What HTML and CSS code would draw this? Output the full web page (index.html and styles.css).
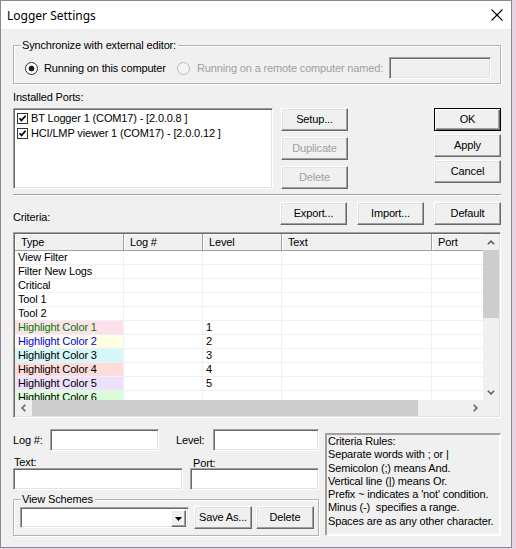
FILE: index.html
```html
<!DOCTYPE html>
<html>
<head>
<meta charset="utf-8">
<title>Logger Settings</title>
<link rel="stylesheet" href="styles.css">
</head>
<body>
<div class="window">
  <div class="titlebar">
    <span class="title">Logger Settings</span>
    <svg class="close" width="12" height="12" viewBox="0 0 12 12"><path d="M0.5 0.5L11.5 11.5M11.5 0.5L0.5 11.5" stroke="#000" stroke-width="1.1" fill="none"/></svg>
  </div>
  <div class="client">
    <fieldset class="group sync">
      <legend>Synchronize with external editor:</legend>
      <div class="sync-row">
        <span class="radio on"></span>
        <span class="rlabel first">Running on this computer</span>
        <span class="radio off"></span>
        <span class="rlabel second disabled">Running on a remote computer named:</span>
        <span class="field remote"></span>
      </div>
    </fieldset>

    <div class="caption ports-caption">Installed Ports:</div>
    <div class="ports-row">
      <div class="field listbox">
        <div class="item">
          <svg class="chk" width="11" height="11" viewBox="0 0 11 11"><rect x="0.5" y="0.5" width="10" height="10" fill="#fff" stroke="#333"/><path d="M2.5 5.2L4.5 7.4L8.6 2.8" stroke="#000" stroke-width="1.7" fill="none"/></svg>
          <span>BT Logger 1 (COM17) - [2.0.0.8 ]</span>
        </div>
        <div class="item">
          <svg class="chk" width="11" height="11" viewBox="0 0 11 11"><rect x="0.5" y="0.5" width="10" height="10" fill="#fff" stroke="#333"/><path d="M2.5 5.2L4.5 7.4L8.6 2.8" stroke="#000" stroke-width="1.7" fill="none"/></svg>
          <span>HCI/LMP viewer 1 (COM17) - [2.0.0.12 ]</span>
        </div>
      </div>
      <div class="btn-col mid">
        <button class="btn">Setup...</button>
        <button class="btn" disabled>Duplicate</button>
        <button class="btn" disabled>Delete</button>
      </div>
      <div class="btn-col right">
        <button class="btn default">OK</button>
        <button class="btn">Apply</button>
        <button class="btn">Cancel</button>
      </div>
    </div>
    <div class="separator"></div>

    <div class="criteria-bar">
      <span class="caption criteria-caption">Criteria:</span>
      <button class="btn">Export...</button>
      <button class="btn import">Import...</button>
      <button class="btn defaults">Default</button>
    </div>

    <div class="grid-frame">
      <div class="grid-view">
        <div class="grid-table">
          <div class="hcell">Type</div><div class="hcell">Log #</div><div class="hcell">Level</div><div class="hcell">Text</div><div class="hcell">Port</div>

          <div class="cell">View Filter</div><div class="cell"></div><div class="cell"></div><div class="cell"></div><div class="cell"></div>
          <div class="cell">Filter New Logs</div><div class="cell"></div><div class="cell"></div><div class="cell"></div><div class="cell"></div>
          <div class="cell">Critical</div><div class="cell"></div><div class="cell"></div><div class="cell"></div><div class="cell"></div>
          <div class="cell">Tool 1</div><div class="cell"></div><div class="cell"></div><div class="cell"></div><div class="cell"></div>
          <div class="cell">Tool 2</div><div class="cell"></div><div class="cell"></div><div class="cell"></div><div class="cell"></div>
          <div class="cell hc1">Highlight Color 1</div><div class="cell"></div><div class="cell">1</div><div class="cell"></div><div class="cell"></div>
          <div class="cell hc2">Highlight Color 2</div><div class="cell"></div><div class="cell">2</div><div class="cell"></div><div class="cell"></div>
          <div class="cell hc3">Highlight Color 3</div><div class="cell"></div><div class="cell">3</div><div class="cell"></div><div class="cell"></div>
          <div class="cell hc4">Highlight Color 4</div><div class="cell"></div><div class="cell">4</div><div class="cell"></div><div class="cell"></div>
          <div class="cell hc5">Highlight Color 5</div><div class="cell"></div><div class="cell">5</div><div class="cell"></div><div class="cell"></div>
          <div class="cell hc6">Highlight Color 6</div><div class="cell"></div><div class="cell"></div><div class="cell"></div><div class="cell"></div>
        </div>
      </div>
      <div class="vscroll">
        <div class="sbtn"><svg width="8" height="5" viewBox="0 0 8 5"><path d="M0.8 4.3L4 1.1L7.2 4.3" stroke="#606060" stroke-width="1.6" fill="none"/></svg></div>
        <div class="vthumb"></div>
        <div class="vtrack"></div>
        <div class="sbtn"><svg width="8" height="5" viewBox="0 0 8 5"><path d="M0.8 0.7L4 3.9L7.2 0.7" stroke="#606060" stroke-width="1.6" fill="none"/></svg></div>
      </div>
      <div class="hscroll">
        <div class="sbtn"><svg width="5" height="8" viewBox="0 0 5 8"><path d="M4.3 0.8L1.1 4L4.3 7.2" stroke="#606060" stroke-width="1.6" fill="none"/></svg></div>
        <div class="hthumb"></div>
        <div class="htrack"></div>
        <div class="sbtn"><svg width="5" height="8" viewBox="0 0 5 8"><path d="M0.7 0.8L3.9 4L0.7 7.2" stroke="#606060" stroke-width="1.6" fill="none"/></svg></div>
      </div>
      <div class="corner"></div>
    </div>

    <div class="bottom">
      <div class="bottom-left">
        <div class="row-log">
          <span class="caption log-label">Log #:</span>
          <span class="field log-field"></span>
          <span class="caption level-label">Level:</span>
          <span class="field level-field"></span>
        </div>
        <div class="row-labels">
          <span class="caption text-label">Text:</span>
          <span class="caption port-label">Port:</span>
        </div>
        <div class="row-text">
          <span class="field text-field"></span>
          <span class="field port-field"></span>
        </div>
        <fieldset class="group schemes">
          <legend>View Schemes</legend>
          <div class="schemes-row">
            <div class="field combo">
              <span class="combo-btn"><svg width="7" height="4" viewBox="0 0 7 4"><path d="M0 0H7L3.5 4Z" fill="#000"/></svg></span>
            </div>
            <button class="btn small save">Save As...</button>
            <button class="btn small del">Delete</button>
          </div>
        </fieldset>
      </div>
      <div class="rules">
        <div>Criteria Rules:</div>
        <div>Separate words with ; or |</div>
        <div>Semicolon (;) means And.</div>
        <div>Vertical line (|) means Or.</div>
        <div>Prefix ~ indicates a 'not' condition.</div>
        <div>Minus (-)&nbsp; specifies a range.</div>
        <div>Spaces are as any other character.</div>
      </div>
    </div>
  </div>
</div>
</body>
</html>
```

FILE: styles.css
```css
* {
  box-sizing: border-box;
}

html,
body {
  margin: 0;
}

body {
  width: 516px;
  height: 549px;
  overflow: hidden;
  background: #e6d2e0;
  font-family: "Liberation Sans", Arial, sans-serif;
  font-size: 11px;
  letter-spacing: -0.15px;
  line-height: 13px;
  color: #000;
}

.window {
  width: 512px;
  height: 548px;
  border: 1px solid #8f8496;
  background: #f0f0f0;
  display: flex;
  flex-direction: column;
}

.titlebar {
  flex: none;
  height: 28px;
  background: #fff;
  display: flex;
  align-items: center;
  padding-left: 6px;
}

.title {
  font-family: "Noto Sans", sans-serif;
  font-size: 12px;
  letter-spacing: 0;
}

.close {
  margin-left: auto;
  margin-right: 8px;
}

.client {
  flex: 1;
  display: flex;
  flex-direction: column;
  padding: 0 10px 0 12px;
}

/* generic controls */
.caption {
  white-space: nowrap;
}

.btn {
  font: inherit;
  letter-spacing: inherit;
  line-height: 13px;
  color: #000;
  width: 67px;
  height: 23px;
  padding: 0 0 1px;
  margin: 0;
  background: #f0f0f0;
  border: 1px solid;
  border-color: #fff #696969 #696969 #fff;
  box-shadow: inset -1px -1px #a0a0a0, inset 1px 1px #e3e3e3;
  display: flex;
  align-items: center;
  justify-content: center;
}

.btn:disabled {
  color: #a0a0a0;
}

.btn.default {
  border-color: #000;
  box-shadow: inset 1px 1px #fff, inset -1px -1px #696969, inset -2px -2px #a0a0a0;
}

.field {
  display: block;
  background: #fff;
  border: 1px solid;
  border-color: #a0a0a0 #fff #fff #a0a0a0;
  box-shadow: inset 1px 1px #696969, inset -1px -1px #e3e3e3;
}

fieldset.group {
  margin: 0;
  padding: 0;
  min-width: 0;
  border: 1px solid #b4b4b4;
  box-shadow: inset 1px 1px #fff, 1px 1px #fff;
}

fieldset.group legend {
  padding: 0 2px 0 1px;
  margin-left: 7px;
  line-height: 13px;
  background: #f0f0f0;
}

/* sync group */
.sync {
  margin-top: 10px !important;
}

.sync-row {
  display: flex;
  align-items: center;
  height: 22px;
  margin: 5px 0 4px 11px;
}

.radio {
  flex: none;
  width: 13px;
  height: 13px;
  border-radius: 50%;
  border: 1px solid #333;
  background: #fff;
}

.radio.on {
  background: radial-gradient(circle, #1a1a1a 0 2.6px, #fff 3.2px);
}

.radio.off {
  border-color: #bcbcbc;
  background: #f4f4f4;
}

.rlabel {
  white-space: nowrap;
  margin-left: 6px;
}

.rlabel.first {
  width: 133px;
}

.rlabel.second {
  width: 192px;
  margin-left: 7px;
}

.disabled {
  color: #a0a0a0;
}

.remote {
  width: 102px;
  height: 22px;
  background: #f0f0f0;
}

/* ports */
.ports-caption {
  margin-top: 7px;
}

.ports-row {
  display: flex;
  margin-top: 4px;
  height: 82px;
}

.listbox {
  width: 260px;
  height: 81px;
  padding: 2px 0 0 3px;
}

.item {
  display: flex;
  align-items: center;
  height: 15px;
  white-space: nowrap;
}

.chk {
  flex: none;
  margin-right: 3px;
}

.btn-col {
  display: flex;
  flex-direction: column;
}

.btn-col.mid {
  margin-left: 8px;
  gap: 6px;
}

.btn-col.right {
  margin-left: auto;
  gap: 3px;
}

.separator {
  margin-top: 4px;
  height: 2px;
  border-top: 1px solid #a0a0a0;
  border-bottom: 1px solid #fff;
}

/* criteria bar */
.criteria-bar {
  display: flex;
  align-items: flex-end;
  margin-top: 6px;
}

.criteria-caption {
  flex: 1;
  margin-bottom: 1px;
}

.criteria-bar .import {
  margin-left: 10px;
}

.criteria-bar .defaults {
  margin-left: 10px;
}

/* grid */
.grid-frame {
  margin-top: 7px;
  height: 186px;
  display: grid;
  grid-template-columns: 1fr 16px;
  grid-template-rows: 1fr 16px;
  border: 1px solid;
  border-color: #a0a0a0 #fff #fff #a0a0a0;
  box-shadow: inset 1px 1px #696969, inset -1px -1px #e3e3e3;
  padding: 1px;
  background: #fff;
}

.grid-view {
  overflow: hidden;
  background: #fff;
}

.grid-table {
  display: grid;
  grid-template-columns: 109px 79px 79px 150px 80px;
  grid-auto-rows: 14px;
  grid-template-rows: 17px;
  width: 497px;
}

.hcell {
  background: #f0f0f0;
  border-right: 1px solid #a0a0a0;
  border-bottom: 1px solid #a0a0a0;
  box-shadow: inset 1px 1px #fff;
  padding: 1px 0 0 6px;
  line-height: 14px;
  white-space: nowrap;
}

.cell {
  border-right: 1px solid #f0f0f0;
  border-bottom: 1px solid #f0f0f0;
  padding-left: 3px;
  line-height: 13px;
  white-space: nowrap;
  overflow: hidden;
}

.hc1 { background: #fde1ea; color: #007a00; }
.hc2 { background: #ffffe3; color: #0000ff; }
.hc3 { background: #d4f7fa; }
.hc4 { background: #fddcd9; }
.hc5 { background: #ece0fb; }
.hc6 { background: #d9fcd9; }

.vscroll {
  display: flex;
  flex-direction: column;
  background: #f0f0f0;
}

.sbtn {
  flex: none;
  width: 16px;
  height: 16px;
  display: flex;
  align-items: center;
  justify-content: center;
}

.vthumb {
  flex: none;
  height: 68px;
  background: #cdcdcd;
}

.vtrack,
.htrack {
  flex: 1;
}

.hscroll {
  display: flex;
  background: #f0f0f0;
}

.hthumb {
  flex: none;
  width: 386px;
  margin-left: 1px;
  background: #cdcdcd;
}

.corner {
  background: #f0f0f0;
}

/* bottom */
.bottom {
  display: flex;
  margin-top: 11px;
}

.bottom-left {
  width: 306px;
  display: flex;
  flex-direction: column;
}

.row-log {
  display: flex;
  align-items: center;
  height: 22px;
}

.log-label {
  width: 37px;
}

.log-field {
  width: 109px;
  height: 22px;
}

.level-label {
  margin-left: 17px;
  width: 37px;
}

.level-field {
  flex: 1;
  height: 22px;
}

.row-labels {
  display: flex;
  margin-top: 5px;
  height: 12px;
}

.text-label {
  width: 180px;
  padding-left: 1px;
}

.port-label {
  padding-top: 1px;
}

.row-text {
  display: flex;
  height: 22px;
  margin-top: 0;
}

.text-field {
  width: 170px;
  height: 22px;
}

.port-field {
  margin-left: 7px;
  flex: 1;
  height: 22px;
}

.schemes {
  margin-top: 3px !important;
}

.schemes-row {
  display: flex;
  align-items: center;
  height: 23px;
  margin: 0 0 6px 6px;
}

.combo {
  width: 169px;
  height: 21px;
  display: flex;
  justify-content: flex-end;
  padding: 2px;
}

.combo-btn {
  width: 15px;
  height: 17px;
  background: #f0f0f0;
  border: 1px solid;
  border-color: #fff #696969 #696969 #fff;
  box-shadow: inset -1px -1px #a0a0a0;
  display: flex;
  align-items: center;
  justify-content: center;
}

.btn.small {
  width: 58px;
}

.btn.save {
  margin-left: 5px;
}

.btn.del {
  margin-left: 4px;
}

.rules {
  margin-left: 6px;
  margin-top: 4px;
  width: 176px;
  height: 103px;
  border: 1px solid;
  border-color: #a0a0a0 #fff #fff #a0a0a0;
  box-shadow: 1px 1px #a0a0a0 inset, -1px -1px #fff inset;
  padding: 1px 0 0 2px;
  line-height: 13.3px;
  white-space: nowrap;
}
```
